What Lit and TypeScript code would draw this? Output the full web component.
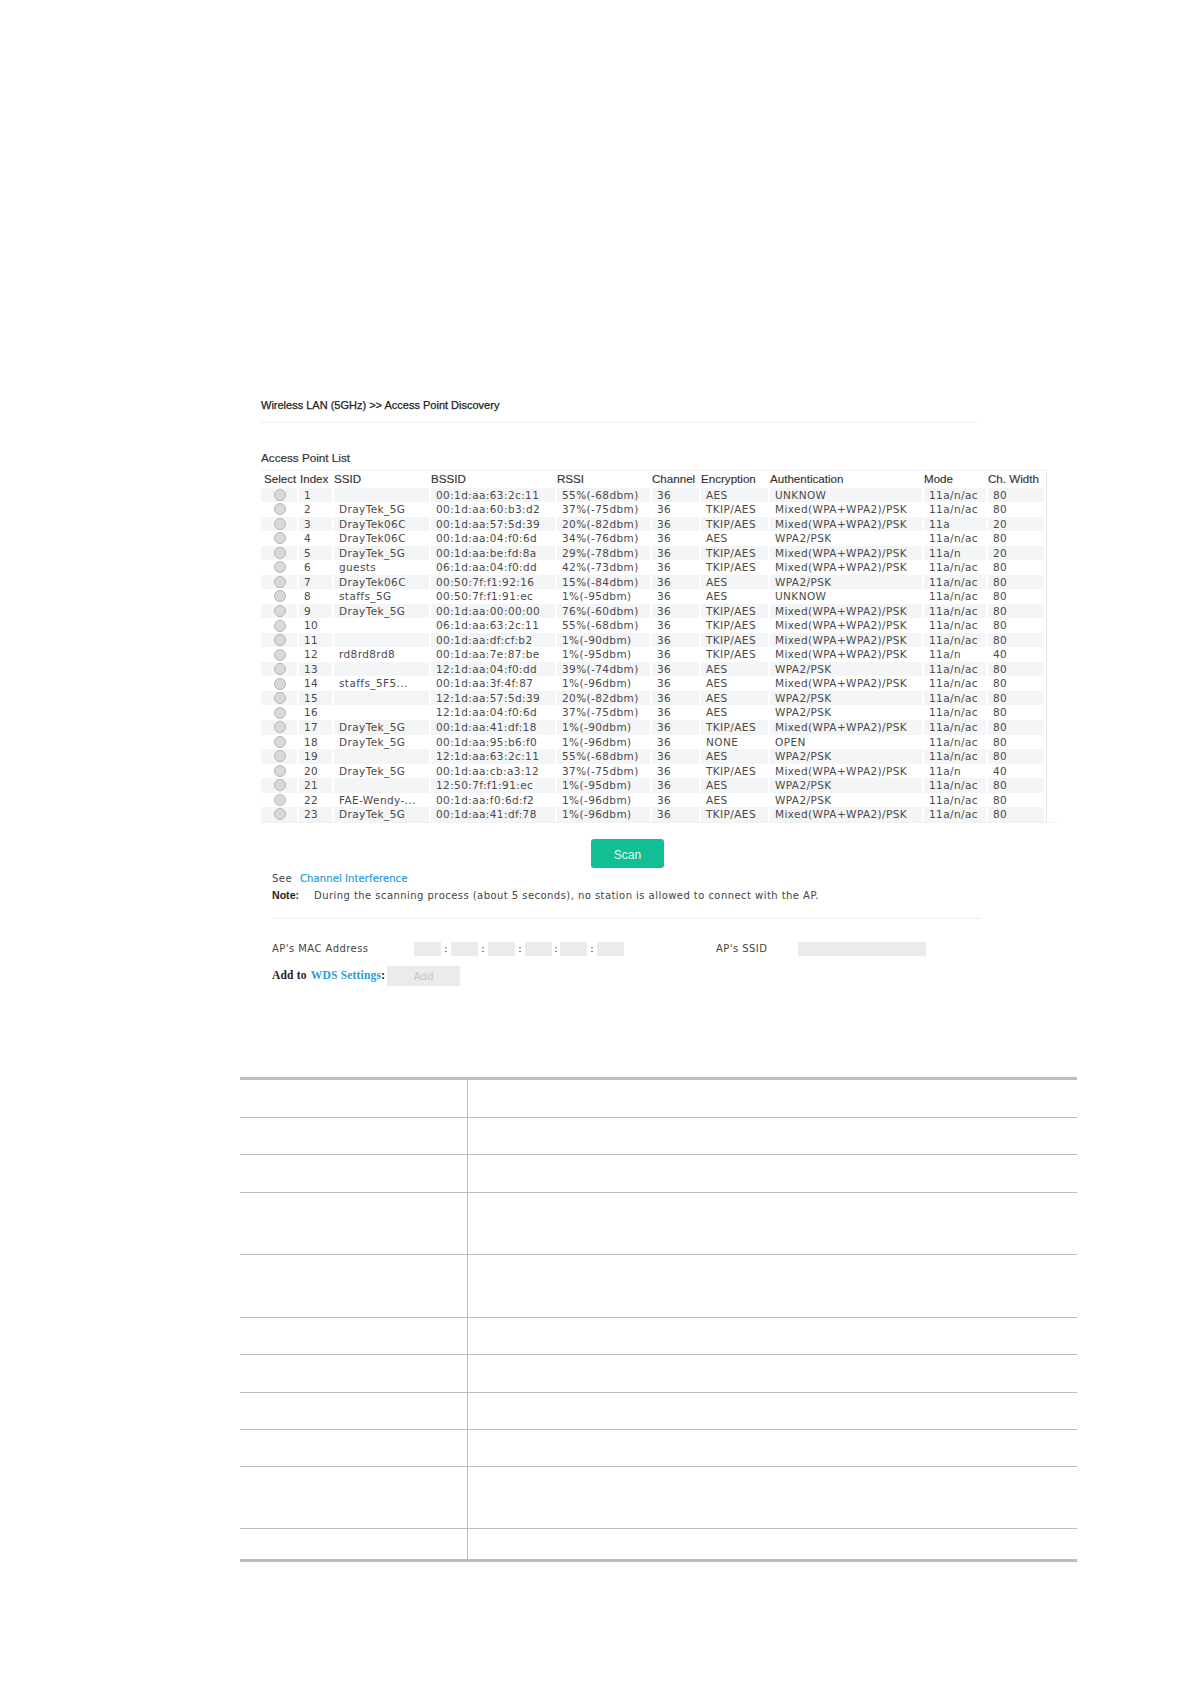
import { LitElement, html, css } from "lit";
import { customElement } from "lit/decorators.js";

const MX = "Mixed(WPA+WPA2)/PSK";
const W = "WPA2/PSK";
const N = "11a/n/ac";
const rows: string[][] = [
  ["", "00:1d:aa:63:2c:11", "55%(-68dbm)", "AES", "UNKNOW", N, "80"],
  ["DrayTek_5G", "00:1d:aa:60:b3:d2", "37%(-75dbm)", "TKIP/AES", MX, N, "80"],
  ["DrayTek06C", "00:1d:aa:57:5d:39", "20%(-82dbm)", "TKIP/AES", MX, "11a", "20"],
  ["DrayTek06C", "00:1d:aa:04:f0:6d", "34%(-76dbm)", "AES", W, N, "80"],
  ["DrayTek_5G", "00:1d:aa:be:fd:8a", "29%(-78dbm)", "TKIP/AES", MX, "11a/n", "20"],
  ["guests", "06:1d:aa:04:f0:dd", "42%(-73dbm)", "TKIP/AES", MX, N, "80"],
  ["DrayTek06C", "00:50:7f:f1:92:16", "15%(-84dbm)", "AES", W, N, "80"],
  ["staffs_5G", "00:50:7f:f1:91:ec", "1%(-95dbm)", "AES", "UNKNOW", N, "80"],
  ["DrayTek_5G", "00:1d:aa:00:00:00", "76%(-60dbm)", "TKIP/AES", MX, N, "80"],
  ["", "06:1d:aa:63:2c:11", "55%(-68dbm)", "TKIP/AES", MX, N, "80"],
  ["", "00:1d:aa:df:cf:b2", "1%(-90dbm)", "TKIP/AES", MX, N, "80"],
  ["rd8rd8rd8", "00:1d:aa:7e:87:be", "1%(-95dbm)", "TKIP/AES", MX, "11a/n", "40"],
  ["", "12:1d:aa:04:f0:dd", "39%(-74dbm)", "AES", W, N, "80"],
  ["staffs_5F5...", "00:1d:aa:3f:4f:87", "1%(-96dbm)", "AES", MX, N, "80"],
  ["", "12:1d:aa:57:5d:39", "20%(-82dbm)", "AES", W, N, "80"],
  ["", "12:1d:aa:04:f0:6d", "37%(-75dbm)", "AES", W, N, "80"],
  ["DrayTek_5G", "00:1d:aa:41:df:18", "1%(-90dbm)", "TKIP/AES", MX, N, "80"],
  ["DrayTek_5G", "00:1d:aa:95:b6:f0", "1%(-96dbm)", "NONE", "OPEN", N, "80"],
  ["", "12:1d:aa:63:2c:11", "55%(-68dbm)", "AES", W, N, "80"],
  ["DrayTek_5G", "00:1d:aa:cb:a3:12", "37%(-75dbm)", "TKIP/AES", MX, "11a/n", "40"],
  ["", "12:50:7f:f1:91:ec", "1%(-95dbm)", "AES", W, N, "80"],
  ["FAE-Wendy-...", "00:1d:aa:f0:6d:f2", "1%(-96dbm)", "AES", W, N, "80"],
  ["DrayTek_5G", "00:1d:aa:41:df:78", "1%(-96dbm)", "TKIP/AES", MX, N, "80"],
];
const heads = ["Select", "Index", "SSID", "BSSID", "RSSI", "Channel", "Encryption", "Authentication", "Mode", "Ch. Width"];
const specRows = [37, 37, 38, 62, 63, 37, 38, 37, 37, 62, 31];

@customElement("app-root")
export class AppRoot extends LitElement {
  static styles = css`
    :host { display: block; width: 1190px; height: 1684px; background: #fff; color: #444; font-family: "DejaVu Sans", sans-serif; overflow: hidden; }
    .page { padding: 397px 0 0 261px; }
    .title { font: 11px/16px "Liberation Sans", sans-serif; color: #222; -webkit-text-stroke: 0.25px #222; }
    .rule { height: 1px; background: #eeeeee; }
    .rule.one { width: 716px; margin-top: 9px; }
    .sub { font: 11.7px/16px "Liberation Sans", sans-serif; color: #333; -webkit-text-stroke: 0.2px #333; margin-top: 27px; }
    .grid { width: 785px; margin-top: 4px; border-top: 1px solid #f0f0f0; border-right: 1px solid #e8e8e8; border-bottom: 1px solid #e8e8e8;
      display: grid; grid-template-columns: 38px 35px 97px 126px 95px 49px 69px 154px 64px 58px; grid-template-rows: 16.5px; grid-auto-rows: 14.545px; }
    .row { display: contents; }
    .h { font: 11.6px/15px "Liberation Sans", sans-serif; color: #333; white-space: nowrap; -webkit-text-stroke: 0.15px #333; }
    .h.first { padding-left: 3px; }
    .h.second { padding-left: 1px; }
    .c { font-size: 10.5px; letter-spacing: 0.4px; line-height: 14px; color: #4a4a4a; padding-left: 5px; border-right: 2px solid #fff; white-space: nowrap; overflow: hidden; }
    .odd .c { background: #f4f5f6; }
    .c.sel { display: flex; align-items: center; justify-content: center; padding: 0 0 0 2px; }
    .radio { width: 10px; height: 10px; border-radius: 50%; border: 1px solid #b5b5b5; background: #d9d9d9; }
    .tail { width: 796px; height: 1px; background: #f2f2f2; margin-top: -1px; }
    .scanrow { width: 785px; display: flex; justify-content: flex-start; margin-top: 16px; padding-left: 330px; box-sizing: border-box; }
    .scan { width: 73px; height: 29px; border-radius: 3px; background: #12bf95; color: #e6f8f3; font: 12px/32px "Liberation Sans", sans-serif; text-align: center; }
    .lower { padding-left: 11px; font-size: 10px; letter-spacing: 0.45px; color: #444; }
    .see { display: flex; margin-top: 3px; line-height: 15px; height: 15px; }
    .see a { color: #2a9bd8; margin-left: 8px; -webkit-text-stroke: 0.2px #2a9bd8; letter-spacing: 0.1px; }
    .note { display: flex; margin-top: 2px; line-height: 15px; }
    .note b { width: 42px; color: #222; font: 700 10.6px/14px "Liberation Sans", sans-serif; letter-spacing: 0; }
    .lower .rule { width: 709px; margin-top: 15px; }
    .mac { display: flex; align-items: center; height: 14px; margin-top: 23px; }
    .lab { width: 142px; }
    .inp { width: 27px; height: 14px; background: #e9ebed; }
    .col { width: 10px; text-align: center; color: #333; letter-spacing: 0; }
    .col.s6 { width: 8px; }
    .ssid { margin-left: 92px; width: 82px; }
    .inp.wide { width: 128px; }
    .add { display: flex; align-items: center; margin-top: 10px; height: 20px; font: 700 11.5px/18px "Liberation Serif", serif; color: #222; letter-spacing: 0.2px; }
    .add span { color: #2a9bd8; margin: 0 0 0 2px; }
    .add i { font-style: normal; margin-right: 2px; }
    .add span, .add i { padding-bottom: 2px; }
    .addbtn { width: 73px; height: 20px; background: #e9ebed; color: #c4c6c8; font: 10px/21px "DejaVu Sans", sans-serif; text-align: center; }
    .spec { width: 837px; margin: 91px 0 0 240px; border-top: 3px solid #bdbdbd; border-bottom: 3px solid #bdbdbd; box-sizing: border-box; }
    .sr { display: grid; grid-template-columns: 228px 1fr; box-sizing: border-box; border-top: 1px solid #bdbdbd; }
    .sr:first-child { border-top: 0; }
    .sr div:first-child { border-right: 1px solid #bdbdbd; }
  `;

  render() {
    return html`
      <div class="page">
        <div class="title">Wireless LAN (5GHz) &gt;&gt; Access Point Discovery</div>
        <div class="rule one"></div>
        <div class="sub">Access Point List</div>
        <div class="grid">
          ${heads.map((h, i) => html`<div class="h ${i === 0 ? "first" : i === 1 ? "second" : ""}">${h}</div>`)}
          ${rows.map((r, i) => html`
            <div class="row ${i % 2 === 0 ? "odd" : ""}">
              <div class="c sel"><span class="radio"></span></div>
              <div class="c">${i + 1}</div>
              ${r.slice(0, 3).map((v) => html`<div class="c">${v}</div>`)}
              <div class="c">36</div>
              ${r.slice(3).map((v) => html`<div class="c">${v}</div>`)}
            </div>`)}
        </div>
        <div class="tail"></div>
        <div class="scanrow"><div class="scan">Scan</div></div>
        <div class="lower">
          <div class="see"><span>See</span><a>Channel Interference</a></div>
          <div class="note"><b>Note:</b><span>During the scanning process (about 5 seconds), no station is allowed to connect with the AP.</span></div>
          <div class="rule"></div>
          <div class="mac">
            <span class="lab">AP's MAC Address</span>
            ${[0, 1, 2, 3, 4].map((i) => html`<span class="inp"></span><span class="col ${i === 3 ? "s6" : ""}">:</span>`)}
            <span class="inp"></span>
            <span class="ssid">AP's SSID</span>
            <span class="inp wide"></span>
          </div>
          <div class="add"><i>Add to</i><span>WDS Settings</span><i>:</i><div class="addbtn">Add</div></div>
        </div>
      </div>
      <div class="spec">
        ${specRows.map((h) => html`<div class="sr" style="height:${h}px"><div></div><div></div></div>`)}
      </div>
    `;
  }
}
